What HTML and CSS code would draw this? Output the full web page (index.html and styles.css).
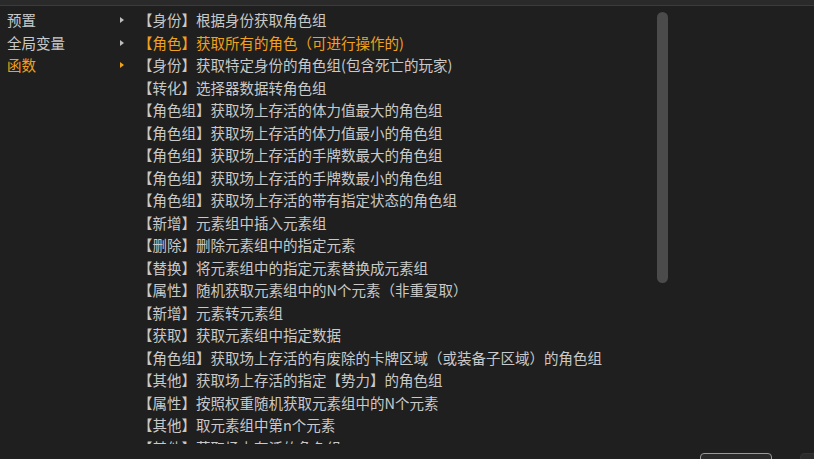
FILE: index.html
```html
<!DOCTYPE html>
<html lang="zh">
<head>
	<meta charset="UTF-8">
	<title>函数</title>
	<link rel="stylesheet" href="styles.css">
</head>
<body>
	<div class="topbar"></div>

	<div class="panel">
		<ul class="menu">
			<li>预置<span class="arrow"></span></li>
			<li>全局变量<span class="arrow"></span></li>
			<li class="active">函数<span class="arrow"></span></li>
		</ul>

		<ul class="list">
			<li>【身份】根据身份获取角色组</li>
			<li class="active">【角色】获取所有的角色（可进行操作的)</li>
			<li>【身份】获取特定身份的角色组(包含死亡的玩家)</li>
			<li>【转化】选择器数据转角色组</li>
			<li>【角色组】获取场上存活的体力值最大的角色组</li>
			<li>【角色组】获取场上存活的体力值最小的角色组</li>
			<li>【角色组】获取场上存活的手牌数最大的角色组</li>
			<li>【角色组】获取场上存活的手牌数最小的角色组</li>
			<li>【角色组】获取场上存活的带有指定状态的角色组</li>
			<li>【新增】元素组中插入元素组</li>
			<li>【删除】删除元素组中的指定元素</li>
			<li>【替换】将元素组中的指定元素替换成元素组</li>
			<li>【属性】随机获取元素组中的N个元素（非重复取）</li>
			<li>【新增】元素转元素组</li>
			<li>【获取】获取元素组中指定数据</li>
			<li>【角色组】获取场上存活的有废除的卡牌区域（或装备子区域）的角色组</li>
			<li>【其他】获取场上存活的指定【势力】的角色组</li>
			<li>【属性】按照权重随机获取元素组中的N个元素</li>
			<li>【其他】取元素组中第n个元素</li>
			<li>【其他】获取场上存活的角色组</li>
		</ul>

		<div class="thumb"></div>
	</div>

	<div class="buttons">
		<span class="btn"></span>
		<span class="btn btn-alt"></span>
	</div>
</body>
</html>
```

FILE: styles.css
```css
html,
body {
	margin: 0;
	height: 100%;
	overflow: hidden;
}

body {
	background: #1f1f1f;
	color: #c9c9c9;
	font: 14.5px/22.5px "Noto Sans CJK SC", "Noto Sans", sans-serif;
	position: relative;
}

ul {
	list-style: none;
	margin: 0;
	padding: 0;
}

.topbar {
	height: 5px;
	background: #2a2a2a;
	border-bottom: 1px solid #3b3b3b;
}

.panel {
	display: flex;
	height: 435px;
	overflow: hidden;
	padding-top: 3px;
	position: relative;
}

.menu {
	width: 138px;
	flex: none;
	padding-left: 7px;
	box-sizing: border-box;
}

.menu li {
	display: flex;
	align-items: center;
	justify-content: space-between;
	padding-right: 14px;
	white-space: nowrap;
}

.arrow {
	width: 0;
	height: 0;
	border-top: 3.5px solid transparent;
	border-bottom: 3.5px solid transparent;
	border-left: 4px solid #bdbdbd;
}

.menu .active {
	color: #f0a21e;
}

.menu .active .arrow {
	border-left-color: #f0a21e;
}

.list {
	flex: 1;
	white-space: nowrap;
}

.list .active {
	color: #f0a21e;
}

.thumb {
	position: absolute;
	left: 657px;
	top: 6px;
	width: 11px;
	height: 271px;
	border-radius: 6px;
	background: #4b4b4b;
}

.buttons {
	position: absolute;
	top: 453px;
	left: 700px;
	display: flex;
	gap: 28px;
}

.btn {
	width: 70px;
	height: 24px;
	border: 1px solid #9a9a9a;
	border-radius: 4px;
	background: #2a2a2a;
}

.btn-alt {
	border-color: #333;
	background: #2c2c2c;
}
```
